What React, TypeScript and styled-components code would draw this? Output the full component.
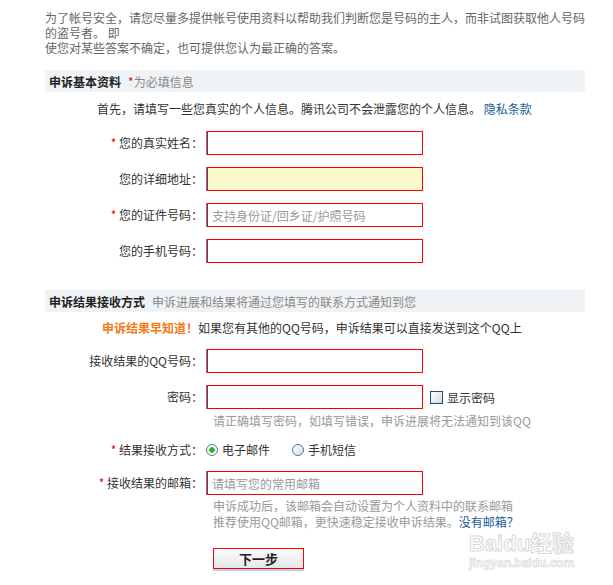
import { FC } from 'react';
import styled, { createGlobalStyle } from 'styled-components';

const GlobalStyle = createGlobalStyle`
  body {
    margin: 0;
    background: #fff;
    font-family: "Noto Sans CJK SC", "Liberation Sans", sans-serif;
    font-size: 12px;
    color: #333;
  }
`;

const App: FC = () => {
  return (
    <Page>
      <GlobalStyle />
      <Intro>
        <IntroLine>为了帐号安全，请您尽量多提供帐号使用资料以帮助我们判断您是号码的主人，而非试图获取他人号码</IntroLine>
        <IntroLine>的盗号者。 即</IntroLine>
        <IntroLine>使您对某些答案不确定，也可提供您认为最正确的答案。</IntroLine>
      </Intro>

      <SectionHeader>
        <SectionTitle>申诉基本资料</SectionTitle>
        <SectionNote>
          <Star>*</Star>为必填信息
        </SectionNote>
      </SectionHeader>
      <Lead>
        首先，请填写一些您真实的个人信息。腾讯公司不会泄露您的个人信息。 <BlueLink href="#">隐私条款</BlueLink>
      </Lead>

      <Row $top={14}>
        <Label>
          <Star>*</Star> 您的真实姓名：
        </Label>
        <Field>
          <TextInput />
        </Field>
      </Row>
      <Row $top={12}>
        <Label>您的详细地址：</Label>
        <Field>
          <TextInput $active />
        </Field>
      </Row>
      <Row $top={12}>
        <Label>
          <Star>*</Star> 您的证件号码：
        </Label>
        <Field>
          <TextInput placeholder="支持身份证/回乡证/护照号码" />
        </Field>
      </Row>
      <Row $top={12}>
        <Label>您的手机号码：</Label>
        <Field>
          <TextInput />
        </Field>
      </Row>

      <SectionHeader $top={27}>
        <SectionTitle>申诉结果接收方式</SectionTitle>
        <SectionNote>申诉进展和结果将通过您填写的联系方式通知到您</SectionNote>
      </SectionHeader>
      <Notice>
        <Orange>申诉结果早知道！</Orange>如果您有其他的QQ号码，申诉结果可以直接发送到这个QQ上
      </Notice>

      <Row $top={13}>
        <Label>接收结果的QQ号码：</Label>
        <Field>
          <TextInput />
        </Field>
      </Row>
      <Row $top={12}>
        <Label>密码：</Label>
        <Field>
          <InputLine>
            <TextInput type="password" />
            <CheckBox />
            <span>显示密码</span>
          </InputLine>
          <Hint $top={4}>请正确填写密码，如填写错误，申诉进展将无法通知到该QQ</Hint>
        </Field>
      </Row>
      <Row $top={9}>
        <Label>
          <Star>*</Star> 结果接收方式：
        </Label>
        <Field>
          <Options>
            <Option>
              <Radio $checked />
              电子邮件
            </Option>
            <Option>
              <Radio />
              手机短信
            </Option>
          </Options>
        </Field>
      </Row>
      <Row $top={9}>
        <Label>
          <Star>*</Star> 接收结果的邮箱：
        </Label>
        <Field>
          <TextInput placeholder="请填写您的常用邮箱" />
          <Hint $top={3}>申诉成功后，该邮箱会自动设置为个人资料中的联系邮箱</Hint>
          <Hint>
            推荐使用QQ邮箱，更快速稳定接收申诉结果。<BlueLink href="#">没有邮箱？</BlueLink>
          </Hint>
          <NextButton type="button">下一步</NextButton>
        </Field>
      </Row>

      <Watermark>
        <WatermarkLogo>Baidu经验</WatermarkLogo>
        <WatermarkUrl>jingyan.baidu.com</WatermarkUrl>
      </Watermark>
    </Page>
  );
};

export default App;

const Page = styled.div`
  position: relative;
  width: 613px;
  height: 585px;
  padding: 10px 0 0 45px;
  box-sizing: border-box;
  overflow: hidden;
`;

const Intro = styled.div`
  display: flex;
  flex-direction: column;
  color: #666;
`;

const IntroLine = styled.span`
  display: block;
  height: 15px;
  line-height: 15px;
  white-space: nowrap;
`;

const SectionHeader = styled.div<{ $top?: number }>`
  margin-top: ${(p) => p.$top ?? 15}px;
  height: 22px;
  width: 540px;
  background: #eff3f6;
  display: flex;
  align-items: center;
  gap: 7px;
  padding-left: 4px;
  box-sizing: border-box;
`;

const SectionTitle = styled.strong`
  font-weight: 700;
  color: #222;
`;

const SectionNote = styled.span`
  color: #888;
`;

const Star = styled.span`
  color: #f00;
`;

const Lead = styled.div`
  margin-top: 9px;
  padding-left: 52px;
  line-height: 16px;
  white-space: nowrap;
`;

const BlueLink = styled.a`
  color: #1a5c96;
  text-decoration: none;
`;

const Notice = styled.div`
  margin-top: 8px;
  padding-left: 57px;
  line-height: 16px;
  white-space: nowrap;
`;

const Orange = styled.span`
  color: #f47b17;
  font-weight: 700;
`;

const Row = styled.div<{ $top: number }>`
  margin-top: ${(p) => p.$top}px;
  display: grid;
  grid-template-columns: 158px auto;
  column-gap: 3px;
  align-items: start;
`;

const Label = styled.label`
  line-height: 24px;
  text-align: right;
  white-space: nowrap;
`;

const Field = styled.div`
  display: flex;
  flex-direction: column;
  align-items: flex-start;
`;

const InputLine = styled.div`
  display: flex;
  align-items: center;
  gap: 4px;
`;

const TextInput = styled.input<{ $active?: boolean }>`
  width: 216px;
  height: 24px;
  box-sizing: border-box;
  margin: 0 0 0 1px;
  padding: 0 4px;
  border: 1px solid #f00;
  box-shadow: -1px 0 0 #2f93bd;
  background: ${(p) => (p.$active ? '#fdf8c9' : '#fff')};
  font-family: inherit;
  font-size: 12px;
  color: #333;
  outline: none;

  &::placeholder {
    color: #999;
  }
`;

const CheckBox = styled.span`
  width: 13px;
  height: 13px;
  box-sizing: border-box;
  border: 1px solid #1d4f7c;
  background: linear-gradient(135deg, #fff, #d8d8d8);
  margin-left: 3px;
`;

const Hint = styled.div<{ $top?: number }>`
  margin-top: ${(p) => p.$top ?? 0}px;
  padding-left: 7px;
  line-height: 16px;
  color: #999;
  white-space: nowrap;
`;

const Options = styled.div`
  display: flex;
  gap: 22px;
  line-height: 24px;
`;

const Option = styled.span`
  display: flex;
  align-items: center;
  gap: 4px;
`;

const Radio = styled.span<{ $checked?: boolean }>`
  width: 12px;
  height: 12px;
  box-sizing: border-box;
  border-radius: 50%;
  border: 1px solid #4a7aa3;
  background: ${(p) =>
    p.$checked
      ? 'radial-gradient(circle, #2fb52f 0 2.5px, #e8f4e8 3px, #fff 5px)'
      : 'linear-gradient(135deg, #fff, #dcdcdc)'};
`;

const NextButton = styled.button`
  margin: 18px 0 0 7px;
  width: 91px;
  height: 21px;
  box-sizing: border-box;
  border: 1px solid #f00;
  background: linear-gradient(#fdfdfd, #e4e6e8);
  box-shadow: 0 2px 0 #b3d5ee;
  font-family: inherit;
  font-size: 13px;
  font-weight: 700;
  color: #222;
  padding: 0;
  cursor: pointer;
`;

const Watermark = styled.div`
  position: absolute;
  left: 469px;
  top: 532px;
  display: flex;
  flex-direction: column;
  align-items: flex-start;
  pointer-events: none;
`;

const WatermarkLogo = styled.span`
  font-family: "Liberation Sans", "Noto Sans CJK SC", sans-serif;
  font-size: 22px;
  font-weight: 700;
  line-height: 24px;
  color: #fff;
  -webkit-text-stroke: 1px #d9d9d9;
`;

const WatermarkUrl = styled.span`
  font-family: "Liberation Sans", sans-serif;
  font-size: 12px;
  font-weight: 700;
  line-height: 14px;
  color: #fff;
  -webkit-text-stroke: 0.7px #d9d9d9;
`;
